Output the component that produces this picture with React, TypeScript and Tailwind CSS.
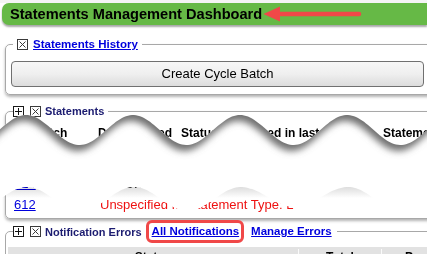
import React from "react";

const P = 107;
const U = (x: number) => 130 - 15 * Math.cos((2 * Math.PI * (x - 26)) / P);
const L = (x: number) => {
  const amp = x > 250 && x < 340 ? 10 : 12;
  return 199 - amp * Math.cos((2 * Math.PI * (x - 27)) / P) - (x > 250 && x < 340 ? 2 : 0);
};

const xs: number[] = [];
for (let x = -10; x <= 440; x += 2) xs.push(x);
const pt = (x: number, y: number) => `${x},${y.toFixed(2)}`;
const upper = xs.map((x) => pt(x, U(x)));
const lower = xs.map((x) => pt(x, L(x)));
const lowerRev = [...lower].reverse();
const upperRev = [...upper].reverse();
const gapPath = `M ${upper.join(" L ")} L ${lowerRev.join(" L ")} Z`;
const upperRegion = `M -10,90 L 440,90 L ${upperRev.join(" L ")} Z`;
const lowerBand = `M ${lower.join(" L ")} L ${xs
  .map((x) => pt(x, L(x) + 12))
  .reverse()
  .join(" L ")} Z`;

const XBox = () => (
  <svg width="11" height="11" viewBox="0 0 11 11" className="shrink-0">
    <rect x="0.5" y="0.5" width="10" height="10" fill="white" stroke="#3a3a3a" />
    <path d="M2.5 2.5 L8.5 8.5 M8.5 2.5 L2.5 8.5" stroke="#3a3a3a" strokeWidth="1" />
  </svg>
);

const PlusBox = () => (
  <svg width="11" height="11" viewBox="0 0 11 11" className="shrink-0">
    <rect x="0.5" y="0.5" width="10" height="10" fill="white" stroke="#1a1a1a" />
    <path d="M2 5.5 H9 M5.5 2 V9" stroke="#111" strokeWidth="1" />
  </svg>
);

export default function App() {
  return (
    <div className="relative w-[427px] h-[254px] overflow-hidden bg-white font-['Liberation_Sans',Arial,sans-serif]">
      <div className="h-[3px] bg-[#f4f4f4]" />
      <div className="ml-[2px] h-[22px] rounded-l-[7px] bg-[#66b946] shadow-[0_2px_2px_rgba(0,0,0,0.35)] flex items-center pl-[8px]">
        <span className="text-[14.6px] font-bold text-black leading-none whitespace-nowrap">
          Statements Management Dashboard
        </span>
        <svg width="100" height="16" viewBox="0 0 100 16" className="ml-[1px] shrink-0">
          <path d="M14 8 H96" stroke="#f04848" strokeWidth="4.5" strokeLinecap="round" />
          <path d="M0.5 8 L17 0.5 L17 15.5 Z" fill="#f04848" />
        </svg>
      </div>

      <fieldset className="ml-[5px] mt-[11px] w-[440px] border border-[#a8a8a8] rounded-[5px] pt-[9px] pb-[7px] pl-[5px] shadow-[0_2px_3px_rgba(0,0,0,0.3)]">
        <legend className="ml-[2px] pl-[4px] pr-[4px]">
          <div className="flex items-center gap-[5px] h-[16px]">
            <XBox />
            <a className="text-[11.5px] font-bold text-[#0000dd] underline leading-[16px] whitespace-nowrap">
              Statements History
            </a>
          </div>
        </legend>
        <button className="w-[413px] h-[26px] border border-[#707070] rounded-[4px] bg-gradient-to-b from-[#f7f7f7] via-[#efefef] to-[#dcdcdc] text-[13px] text-black">
          Create Cycle Batch
        </button>
      </fieldset>

      <fieldset className="ml-[5px] mt-[8px] w-[440px] border border-[#a8a8a8] rounded-[5px] pt-[6px] pb-[3px] shadow-[0_2px_3px_rgba(0,0,0,0.3)]">
        <legend className="ml-[7px] pr-[4px]">
          <div className="flex items-center h-[16px]">
            <PlusBox />
            <span className="ml-[6px]">
              <XBox />
            </span>
            <span className="ml-[4px] text-[11px] font-bold text-[#1b1b70] leading-[16px] whitespace-nowrap">
              Statements
            </span>
          </div>
        </legend>
        <div className="flex h-[16px] text-[12px] font-bold text-black leading-[16px] whitespace-nowrap">
          <span className="w-[84px] pl-[28px]">Batch</span>
          <span className="w-[83px] pl-[8px]">Date Created</span>
          <span className="w-[53px] pl-[8px]">Status</span>
          <span className="w-[152px] pl-[6px]">Finished in last 30 days</span>
          <span className="pl-[5px]">Statements</span>
        </div>
        <div className="h-[32px]" />
        <div className="flex h-[21px] text-[13px] leading-[21px] whitespace-nowrap">
          <span className="w-[118px] pl-[8px]">
            <a className="text-[#0000dd] underline">614</a>
          </span>
          <span className="text-black">OIC</span>
        </div>
        <div className="flex h-[21px] text-[13px] leading-[21px] whitespace-nowrap">
          <span className="w-[94px] pl-[8px]">
            <a className="text-[#0000dd] underline">612</a>
          </span>
          <span className="text-[#ee1111]">Unspecified ID Statement Type: L</span>
        </div>
      </fieldset>

      <fieldset className="ml-[5px] mt-[1px] w-[440px] border border-[#a8a8a8] rounded-[5px] pt-[4px] pl-[2px]">
        <legend className="ml-[5px] pr-[5px]">
          <div className="flex items-center h-[23px] whitespace-nowrap">
            <PlusBox />
            <span className="ml-[6px]">
              <XBox />
            </span>
            <span className="ml-[4px] text-[11px] font-bold text-[#1b1b70] leading-[16px]">
              Notification Errors
            </span>
            <span className="ml-[4px] flex items-center h-[23px] border-[3px] border-[#f04848] rounded-[6px] pl-[3px] pr-[2px]">
              <a className="text-[11.5px] font-bold text-[#0000dd] underline leading-[17px]">
                All Notifications
              </a>
            </span>
            <a className="ml-[7px] text-[11.5px] font-bold text-[#0000dd] underline leading-[17px]">
              Manage Errors
            </a>
          </div>
        </legend>
        <div className="flex h-[20px] bg-[#e2e2e2] text-[12px] font-bold text-black leading-[16px] pt-[2px] whitespace-nowrap">
          <span className="w-[290px] text-center">Status</span>
          <span className="w-[1px] bg-[#fafafa]" />
          <span className="w-[82px] text-center">Total</span>
          <span className="w-[1px] bg-[#fafafa]" />
          <span className="pl-[23px]">Pending</span>
        </div>
      </fieldset>

      <svg className="absolute left-0 top-0 pointer-events-none" width="427" height="254">
        <defs>
          <filter id="tearBlur" x="-10%" y="-50%" width="120%" height="200%">
            <feGaussianBlur stdDeviation="3.5" />
          </filter>
          <clipPath id="gapClip">
            <path d={gapPath} />
          </clipPath>
        </defs>
        <path d={gapPath} fill="white" />
        <g clipPath="url(#gapClip)">
          <path d={upperRegion} fill="#707070" filter="url(#tearBlur)" transform="translate(-2,6)" />
        </g>
      </svg>
      <svg className="absolute left-0 top-0 pointer-events-none mix-blend-multiply" width="427" height="254">
        <defs>
          <linearGradient id="bumpGrad" gradientUnits="userSpaceOnUse" x1="0" y1="186" x2="0" y2="198">
            <stop offset="0" stopColor="#dadada" />
            <stop offset="1" stopColor="#ffffff" />
          </linearGradient>
        </defs>
        <path d={lowerBand} fill="url(#bumpGrad)" />
      </svg>
    </div>
  );
}
